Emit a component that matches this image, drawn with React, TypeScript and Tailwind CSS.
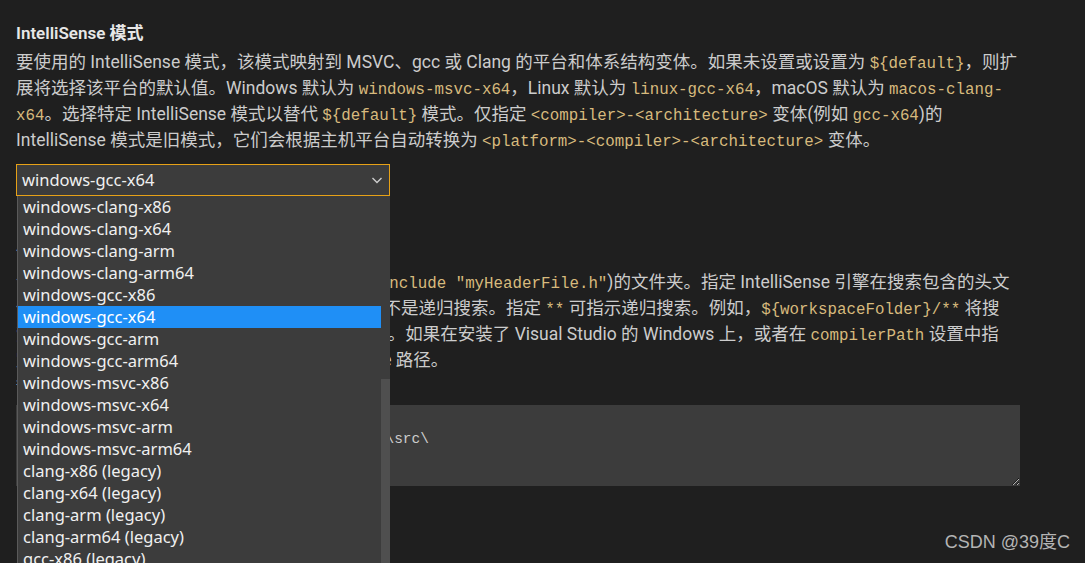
const options = [
  'windows-clang-x86',
  'windows-clang-x64',
  'windows-clang-arm',
  'windows-clang-arm64',
  'windows-gcc-x86',
  'windows-gcc-x64',
  'windows-gcc-arm',
  'windows-gcc-arm64',
  'windows-msvc-x86',
  'windows-msvc-x64',
  'windows-msvc-arm',
  'windows-msvc-arm64',
  'clang-x86 (legacy)',
  'clang-x64 (legacy)',
  'clang-arm (legacy)',
  'clang-arm64 (legacy)',
  'gcc-x86 (legacy)',
  'gcc-x64 (legacy)',
];

const selected = 'windows-gcc-x64';

function Code({ children }: { children: React.ReactNode }) {
  return <code className="font-['Liberation_Mono',monospace] text-[15.8px] leading-none text-[#d7ba7d]">{children}</code>;
}

function Chevron() {
  return (
    <svg width="16" height="16" viewBox="0 0 16 16" fill="none" className="text-[#cccccc]">
      <path d="M3.5 6l4.5 4.5L12.5 6" stroke="currentColor" strokeWidth="1.4" />
    </svg>
  );
}

function ModeSelect() {
  return (
    <div className="relative mt-[11px] w-[374px] font-['Noto_Sans',sans-serif]">
      <div className="flex h-[32px] items-center justify-between border border-[#e6a117] bg-[#3c3c3c] pl-[5px] pr-[4px] text-[16.5px] text-[#f0f0f0]">
        <span>{selected}</span>
        <Chevron />
      </div>
      {/* open dropdown list */}
      <div className="absolute left-[1px] top-full z-10 flex h-[380px] w-[373px] overflow-hidden border-l border-[#5a5a5a] bg-[#3c3c3c]">
        <ul className="flex-1">
          {options.map(o => (
            <li
              key={o}
              className={`h-[22px] pl-[5px] text-[16.5px] leading-[22px] ${o === selected ? 'bg-[#1f8ff6] text-white' : 'text-[#f0f0f0]'}`}
            >
              {o}
            </li>
          ))}
        </ul>
        <div className="w-[9px] pt-[183px]">
          <div className="h-full bg-[#4f4f4f]" />
        </div>
      </div>
    </div>
  );
}

export default function App() {
  return (
    <div className="relative h-[563px] w-[1085px] overflow-hidden bg-[#1f1f1f] font-['Roboto','Noto_Sans_CJK_SC',sans-serif] text-[#cccccc]">
      <div className="px-4 pt-[20px]">
        <section>
          <h2 className="text-[17px] font-semibold leading-[26px] text-[#e7e7e7]">IntelliSense 模式</h2>
          <div className="mt-[3px] whitespace-nowrap text-[17.5px] leading-[26px]">
            <div>要使用的 IntelliSense 模式，该模式映射到 MSVC、gcc 或 Clang 的平台和体系结构变体。如果未设置或设置为 <Code>{'${default}'}</Code>，则扩</div>
            <div>展将选择该平台的默认值。Windows 默认为 <Code>windows-msvc-x64</Code>，Linux 默认为 <Code>linux-gcc-x64</Code>，macOS 默认为 <Code>macos-clang-</Code></div>
            <div><Code>x64</Code>。选择特定 IntelliSense 模式以替代 <Code>{'${default}'}</Code> 模式。仅指定 <Code>{'<compiler>-<architecture>'}</Code> 变体(例如 <Code>gcc-x64</Code>)的</div>
            <div>IntelliSense 模式是旧模式，它们会根据主机平台自动转换为 <Code>{'<platform>-<compiler>-<architecture>'}</Code> 变体。</div>
          </div>
          <ModeSelect />
        </section>

        <section className="mt-[44px]">
          <h2 className="text-[17px] font-semibold leading-[26px] text-[#e7e7e7]">包含路径</h2>
          <div className="mt-[3px] whitespace-nowrap text-[17.5px] leading-[26px]">
            <div>包含路径是包括源文件中包含的头文件（例如 <Code>#include "myHeaderFile.h"</Code>)的文件夹。指定 IntelliSense 引擎在搜索包含的头文</div>
            <div>件时要使用的路径列表。对这些路径进行的搜索不是递归搜索。指定 <Code>**</Code> 可指示递归搜索。例如，<Code>{'${workspaceFolder}/**'}</Code> 将搜</div>
            <div>索所有子目录，而 <Code>{'${workspaceFolder}'}</Code> 则不会。如果在安装了 Visual Studio 的 Windows 上，或者在 <Code>compilerPath</Code> 设置中指</div>
            <div>定了编译器，则无需在此列表中列出系统 include 路径。</div>
          </div>
          <p className="text-[14px] leading-[20px]">每行一个包含路径。</p>
          <textarea
            readOnly
            rows={3}
            className="mt-[12px] block h-[81px] w-[1004px] resize bg-[#3c3c3c] px-[4px] pt-[1px] font-['Liberation_Mono',monospace] text-[14.5px] leading-[22px] text-[#cccccc] outline-none"
            defaultValue={'${workspaceFolder}/**\nC:\\Users\\Administrator\\Desktop\\cpp_project\\src\\'}
          />
        </section>
      </div>

      <div className="absolute bottom-[7px] right-[15px] font-['Liberation_Sans','Noto_Sans_CJK_SC',sans-serif] text-[18px] text-[#b4b4b4]">
        CSDN @39度C
      </div>
    </div>
  );
}
